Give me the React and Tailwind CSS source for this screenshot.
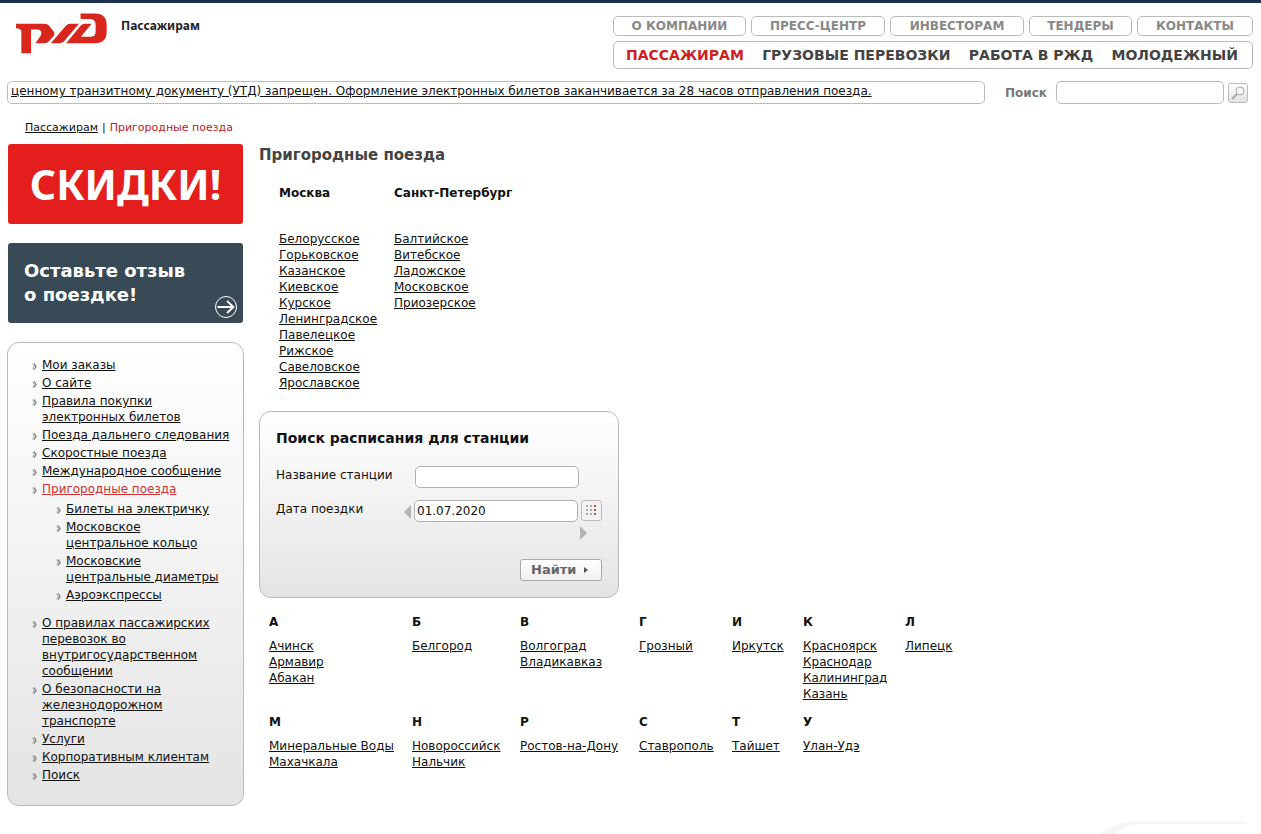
import React from 'react';

const TOP_LINKS = [
  { label: 'О КОМПАНИИ', width: 'w-[133px]' },
  { label: 'ПРЕСС-ЦЕНТР', width: 'w-[134px]' },
  { label: 'ИНВЕСТОРАМ', width: 'w-[134px]' },
  { label: 'ТЕНДЕРЫ', width: 'w-[103px]' },
  { label: 'КОНТАКТЫ', width: 'w-[116px]' },
];

const MAIN_LINKS = ['ПАССАЖИРАМ', 'ГРУЗОВЫЕ ПЕРЕВОЗКИ', 'РАБОТА В РЖД', 'МОЛОДЕЖНЫЙ'];

const MENU = [
  { label: 'Мои заказы' },
  { label: 'О сайте' },
  { label: 'Правила покупки электронных билетов' },
  { label: 'Поезда дальнего следования' },
  { label: 'Скоростные поезда' },
  { label: 'Международное сообщение' },
  {
    label: 'Пригородные поезда',
    active: true,
    children: [
      'Билеты на электричку',
      'Московское центральное кольцо',
      'Московские центральные диаметры',
      'Аэроэкспрессы',
    ],
  },
  { label: 'О правилах пассажирских перевозок во внутригосударственном сообщении' },
  { label: 'О безопасности на железнодорожном транспорте' },
  { label: 'Услуги' },
  { label: 'Корпоративным клиентам' },
  { label: 'Поиск' },
];

const DIRECTIONS = [
  {
    city: 'Москва',
    items: [
      'Белорусское', 'Горьковское', 'Казанское', 'Киевское', 'Курское',
      'Ленинградское', 'Павелецкое', 'Рижское', 'Савеловское', 'Ярославское',
    ],
  },
  {
    city: 'Санкт-Петербург',
    items: ['Балтийское', 'Витебское', 'Ладожское', 'Московское', 'Приозерское'],
  },
];

const CITY_ROWS = [
  [
    { letter: 'А', cities: ['Ачинск', 'Армавир', 'Абакан'] },
    { letter: 'Б', cities: ['Белгород'] },
    { letter: 'В', cities: ['Волгоград', 'Владикавказ'] },
    { letter: 'Г', cities: ['Грозный'] },
    { letter: 'И', cities: ['Иркутск'] },
    { letter: 'К', cities: ['Красноярск', 'Краснодар', 'Калининград', 'Казань'] },
    { letter: 'Л', cities: ['Липецк'] },
  ],
  [
    { letter: 'М', cities: ['Минеральные Воды', 'Махачкала'] },
    { letter: 'Н', cities: ['Новороссийск', 'Нальчик'] },
    { letter: 'Р', cities: ['Ростов-на-Дону'] },
    { letter: 'С', cities: ['Ставрополь'] },
    { letter: 'Т', cities: ['Тайшет'] },
    { letter: 'У', cities: ['Улан-Удэ'] },
  ],
];

const Logo = () => (
  <svg viewBox="0 0 272 122" className="h-[41px] w-[91px]" fill="#d9261c" aria-label="РЖД">
    <path d="M0 32H86Q94 32 99 38L113 56Q117 62 113 68L98 85Q93 90 85 90H58L74 68Q78 60 75 54Q72 49 64 49H45V120H16V56Q16 45 0 45Z" />
    <path d="M104 90L149 38Q154 32 162 32H188L143 85Q138 90 130 90Z" />
    <path d="M193 1H236Q271 1 271 36V55Q271 90 236 90H150L193 38Q198 32 206 32H226L194 71H222Q238 71 238 55V36Q238 18 222 18H193Z" />
  </svg>
);

const Chevron = () => (
  <svg viewBox="0 0 5 7" className="mt-1.5 h-[7px] w-[5px] shrink-0" fill="none" stroke="#888" aria-hidden="true">
    <path d="M0.500 0.500L2 3.500L0.500 6.500" strokeWidth="0.600" />
    <path d="M2 0.500L4 3.500L2 6.500" strokeWidth="1.400" />
  </svg>
);

const Header = () => (
  <header className="flex items-start justify-between pt-2.5 pr-2 pl-4">
    <div className="flex">
      <a href="#home">
        <Logo />
      </a>
      <span className="ml-3.5 pt-[5px] font-['Noto_Sans'] text-xs leading-4 font-bold text-[#222]">Пассажирам</span>
    </div>
    <div className="mt-[3px] w-[640px]">
      <nav className="flex justify-between">
        {TOP_LINKS.map((link) => (
          <a
            key={link.label}
            href="#top"
            className={`${link.width} h-5 rounded-[5px] border border-[#bbb] text-center text-xs leading-[18px] font-bold text-[#888]`}
          >
            {link.label}
          </a>
        ))}
      </nav>
      <nav className="mt-[5px] flex h-7 items-center justify-between rounded-[5px] border border-[#bbb] pr-3.5 pl-3 text-sm font-bold text-[#444]">
        {MAIN_LINKS.map((label, i) => (
          <a key={label} href="#main" className={i === 0 ? 'text-[#cc2222]' : ''}>
            {label}
          </a>
        ))}
      </nav>
    </div>
  </header>
);

const Ticker = () => (
  <div className="mt-3 flex items-start pr-[13px] pl-[7px]">
    <div className="h-[23px] min-w-0 flex-1 overflow-hidden rounded-[5px] border border-[#bbb] pl-[3px] leading-[18px] whitespace-nowrap">
      <a href="#news" className="underline">
        ценному транзитному документу (УТД) запрещен. Оформление электронных билетов заканчивается за 28 часов отправления поезда.
      </a>
    </div>
    <form className="ml-5 flex items-center">
      <label htmlFor="site-search" className="w-[51px] font-bold text-[#777]">Поиск</label>
      <input id="site-search" type="text" className="h-[23px] w-[168px] rounded-[5px] border border-[#bbb] px-1" />
      <button
        type="button"
        aria-label="Искать"
        className="ml-1 flex size-5 items-center justify-center rounded-[3px] border border-[#bbb] bg-linear-to-b from-white to-[#e2e2e2]"
      >
        <svg viewBox="0 0 16 16" className="size-4" fill="none" stroke="#aaa">
          <circle cx="10" cy="6" r="4" fill="#f8f8f8" />
          <path d="M7 9L2 14" strokeWidth="2" />
        </svg>
      </button>
    </form>
  </div>
);

const SideMenu = () => (
  <nav className="mt-[19px] -ml-px w-[237px] rounded-xl border border-[#bbb] bg-linear-to-b from-white to-[#e4e4e4] pt-3.5 pr-2 pb-[22px] pl-6">
    <ul className="space-y-0.5">
      {MENU.map((item) => (
        <li key={item.label} className={item.children ? 'pb-2.5' : ''}>
          <div className="flex">
            <Chevron />
            <a href="#menu" className={`ml-[5px] underline ${item.active ? 'text-[#c33]' : ''}`}>
              {item.label}
            </a>
          </div>
          {item.children && (
            <ul className="mt-1 space-y-0.5 pr-3 pl-6">
              {item.children.map((child) => (
                <li key={child} className="flex">
                  <Chevron />
                  <a href="#submenu" className="ml-[5px] underline">{child}</a>
                </li>
              ))}
            </ul>
          )}
        </li>
      ))}
    </ul>
  </nav>
);

const Sidebar = () => (
  <aside className="w-[235px] shrink-0">
    <a
      href="#discounts"
      className="flex h-20 items-center justify-center rounded-[3px] bg-[#e31e1c] font-['Noto_Sans'] text-[41px] font-bold text-white"
    >
      СКИДКИ!
    </a>
    <a
      href="#feedback"
      className="mt-[19px] flex h-20 justify-between rounded-[3px] bg-[#394a57] pt-4 pr-[5px] pl-4 text-lg leading-6 font-bold text-white"
    >
      <span>
        Оставьте отзыв
        <br />
        о поездке!
      </span>
      <svg viewBox="0 0 24 24" className="mb-1 size-6 self-end" fill="none" stroke="#fff" aria-hidden="true">
        <circle cx="12" cy="12" r="10.500" />
        <path d="M3.500 12H19.500M13 6L19.500 12L13 18" strokeWidth="1.800" />
      </svg>
    </a>
    <SideMenu />
  </aside>
);

const StationSearch = () => (
  <form className="mt-5 w-[360px] rounded-xl border border-[#bbb] bg-linear-to-b from-white to-[#e4e4e4] px-4 pb-4">
    <h2 className="pt-4 text-sm leading-5 font-bold">Поиск расписания для станции</h2>
    <div className="mt-[18px] flex h-[22px]">
      <label htmlFor="station" className="w-[139px] pt-px">Название станции</label>
      <input id="station" type="text" className="h-[22px] w-[164px] rounded-[5px] border border-[#b0b0b0] bg-white px-0.5" />
    </div>
    <div className="mt-3 flex h-[22px] items-start">
      <label htmlFor="date" className="w-32 pt-px">Дата поездки</label>
      <button type="button" aria-label="Предыдущий день" className="pt-[5px]">
        <svg viewBox="0 0 8 14" className="h-3.5 w-2" fill="#b3b3b3"><path d="M7 0V14L0 7Z" /></svg>
      </button>
      <input
        id="date"
        type="text"
        defaultValue="01.07.2020"
        className="ml-0.5 h-[22px] w-[164px] rounded-[5px] border border-[#b0b0b0] bg-white px-0.5"
      />
      <button
        type="button"
        aria-label="Календарь"
        className="ml-[3px] flex size-[21px] items-center justify-center rounded-[3px] border border-[#bbb] bg-[#f2f2f2]"
      >
        <svg viewBox="0 0 11 11" className="size-[11px]">
          <path d="M0 0h2v2H0zM4 0h2v2H4zM0 4h2v2H0zM4 4h2v2H4zM0 8h2v2H0zM4 8h2v2H4z" fill="#aaa" />
          <path d="M8 0h2v2H8zM8 4h2v2H8zM8 8h2v2H8z" fill="#a55" />
        </svg>
      </button>
    </div>
    <div className="mt-1 flex justify-end pr-[15px]">
      <button type="button" aria-label="Следующий день">
        <svg viewBox="0 0 8 14" className="h-3.5 w-2" fill="#b3b3b3"><path d="M1 0V14L8 7Z" /></svg>
      </button>
    </div>
    <div className="mt-[19px] flex justify-end">
      <button
        type="button"
        className="flex h-[22px] w-[82px] items-center rounded-[3px] border border-[#aaa] bg-linear-to-b from-white to-[#f0f0f0] pl-2.5 text-[13px] font-bold text-[#666]"
      >
        Найти
        <svg viewBox="0 0 4 6" className="ml-2 h-1.5 w-1" fill="#555"><path d="M0 0L4 3L0 6Z" /></svg>
      </button>
    </div>
  </form>
);

const App = () => (
  <div className="overflow-x-hidden bg-white font-['DejaVu_Sans',sans-serif] text-xs leading-4 text-[#111]">
    <div className="h-[3px] bg-[#1b314d]" />
    <Header />
    <Ticker />
    <div className="mt-4 pl-[25px] text-[11px]">
      <a href="#passengers" className="underline">Пассажирам</a>
      <span className="px-1">|</span>
      <span className="text-[#b22]">Пригородные поезда</span>
    </div>
    <div className="mt-2 flex pl-2">
      <Sidebar />
      <main className="ml-4 min-w-0 flex-1">
        <h1 className="text-[15px] leading-[22px] font-bold text-[#444]">Пригородные поезда</h1>
        <div className="mt-[19px] grid grid-cols-[115px_auto] justify-start pl-5">
          {DIRECTIONS.map((direction) => (
            <div key={direction.city}>
              <h2 className="mb-[30px] font-bold">{direction.city}</h2>
              <ul>
                {direction.items.map((item) => (
                  <li key={item}>
                    <a href="#direction" className="underline">{item}</a>
                  </li>
                ))}
              </ul>
            </div>
          ))}
        </div>
        <StationSearch />
        <div className="mt-4 space-y-3 pl-2.5">
          {CITY_ROWS.map((row) => (
            <div key={row[0].letter} className="grid grid-cols-[143px_108px_119px_93px_71px_102px_auto]">
              {row.map((group) => (
                <div key={group.letter}>
                  <h3 className="mb-2 font-bold">{group.letter}</h3>
                  <ul>
                    {group.cities.map((city) => (
                      <li key={city}>
                        <a href="#city" className="underline">{city}</a>
                      </li>
                    ))}
                  </ul>
                </div>
              ))}
            </div>
          ))}
        </div>
      </main>
    </div>
    <footer className="mt-[15px] flex justify-end pr-3.5">
      <svg viewBox="0 0 146 13" className="h-[13px] w-[146px]" fill="#f5f5f5" aria-hidden="true">
        <path d="M0 13Q14 1 28 1H146V3H36Q24 4 16 13Z" />
      </svg>
    </footer>
  </div>
);

export default App;
